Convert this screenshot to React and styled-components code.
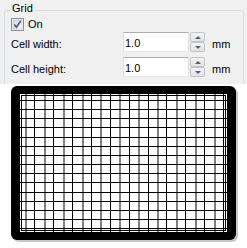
import styled, { createGlobalStyle } from "styled-components";

const GlobalStyle = createGlobalStyle`
  html, body {
    margin: 0;
    padding: 0;
    background: #f0f0f0;
  }
  body {
    font-family: "Liberation Sans", Arial, sans-serif;
    font-size: 11px;
    color: #000;
  }
`;

const Page = styled.div`
  width: 247px;
  height: 248px;
  display: flex;
  flex-direction: column;
  overflow: hidden;
`;

const GroupBox = styled.div`
  position: relative;
  margin: 10px 3px 0 4px;
  border: 1px solid #d5dfe5;
  border-bottom: none;
  border-radius: 3px 3px 0 0;
  padding: 6px 0 0 6px;
  box-sizing: border-box;
  height: 74px;
`;

const Legend = styled.span`
  position: absolute;
  top: -9px;
  left: 5px;
  padding: 0 2px;
  line-height: 13px;
  background: #f0f0f0;
`;

const CheckRow = styled.label`
  display: flex;
  align-items: center;
  gap: 4px;
  height: 13px;
  line-height: 13px;
  margin-top: 1px;
`;

const FieldRow = styled.div`
  display: flex;
  align-items: flex-start;
  height: 20px;
  margin-top: ${(p) => p.$gap}px;
`;

const Label = styled.span`
  width: 112px;
  line-height: 20px;
  margin-top: 2px;
`;

const TextBox = styled.div`
  width: 66px;
  height: 20px;
  box-sizing: border-box;
  background: #fff;
  border: 1px solid #dbdfe6;
  border-top-color: #abadb3;
  border-bottom-color: #e3e9ef;
  padding: 2px 0 0 1px;
  line-height: 16px;
`;

const Spin = styled.div`
  display: flex;
  flex-direction: column;
  width: 15px;
  height: 20px;
  margin-left: 1px;
`;

const SpinButton = styled.div`
  flex: 1;
  display: flex;
  align-items: center;
  justify-content: center;
  box-sizing: border-box;
  border: 1px solid #c3c3c3;
  border-radius: 2px;
  background: linear-gradient(#f4f4f4, #e3e3e3);
`;

const Arrow = styled.span`
  width: 0;
  height: 0;
  border-left: 3px solid transparent;
  border-right: 3px solid transparent;
  ${(p) =>
    p.$up
      ? "border-bottom: 3px solid #4d6185;"
      : "border-top: 3px solid #4d6185;"}
`;

const Unit = styled.span`
  margin-left: 7px;
  line-height: 20px;
  margin-top: 2px;
`;

const CanvasPanel = styled.div`
  flex: 1;
  background: #fff;
  padding: 2px 0 0 11px;
`;

function CheckBox() {
  return (
    <svg width="13" height="13" viewBox="0 0 13 13">
      <defs>
        <linearGradient id="cbg" x1="0" y1="0" x2="1" y2="1">
          <stop offset="0" stopColor="#d8d8d8" />
          <stop offset="1" stopColor="#fbfbfb" />
        </linearGradient>
      </defs>
      <rect x="0.5" y="0.5" width="12" height="12" fill="#f4f4f4" stroke="#8e8f8f" />
      <rect x="2" y="2" width="9" height="9" fill="url(#cbg)" stroke="#bcbcbc" strokeWidth="0.5" />
      <path d="M3.3 6.4 L5.4 9.2 L9.8 2.8" fill="none" stroke="#4a5f9c" strokeWidth="1.7" />
    </svg>
  );
}

function GridCanvas() {
  const vertical = Array.from({ length: 22 }, (_, i) => Math.round(14 + 9.43 * i));
  const horizontal = Array.from({ length: 15 }, (_, k) => Math.round(14 + 9.16 * k));
  return (
    <svg width="228" height="158" viewBox="0 0 228 158">
      <rect x="2" y="2" width="225" height="154" rx="6" fill="#c8c8c8" />
      <rect x="0" y="0" width="225" height="154" rx="6" fill="#000" />
      <g shapeRendering="crispEdges">
        <rect x="9" y="8" width="207" height="138" fill="#fff" />
        {vertical.map((x, i) =>
          i % 2 === 0 ? (
            <line key={"v" + i} x1={x + 1} y1="8" x2={x + 1} y2="146" stroke="#7f7f7f" strokeWidth="2" />
          ) : (
            <line key={"v" + i} x1={x + 0.5} y1="8" x2={x + 0.5} y2="146" stroke="#000" strokeWidth="1" />
          )
        )}
        {horizontal.map((y, k) => (
          <line key={"h" + k} x1="9" y1={y + 0.5} x2="216" y2={y + 0.5} stroke="#000" strokeWidth="1" />
        ))}
        <rect x="10.5" y="9.5" width="204" height="135" fill="none" stroke="#000" strokeWidth="1" />
      </g>
    </svg>
  );
}

function NumberField({ label, value, gap }) {
  return (
    <FieldRow $gap={gap}>
      <Label>{label}</Label>
      <TextBox>{value}</TextBox>
      <Spin>
        <SpinButton>
          <Arrow $up />
        </SpinButton>
        <SpinButton>
          <Arrow />
        </SpinButton>
      </Spin>
      <Unit>mm</Unit>
    </FieldRow>
  );
}

export default function App() {
  return (
    <Page>
      <GlobalStyle />
      <GroupBox>
        <Legend>Grid</Legend>
        <CheckRow>
          <CheckBox />
          On
        </CheckRow>
        <NumberField label="Cell width:" value="1.0" gap={1} />
        <NumberField label="Cell height:" value="1.0" gap={5} />
      </GroupBox>
      <CanvasPanel>
        <GridCanvas />
      </CanvasPanel>
    </Page>
  );
}
